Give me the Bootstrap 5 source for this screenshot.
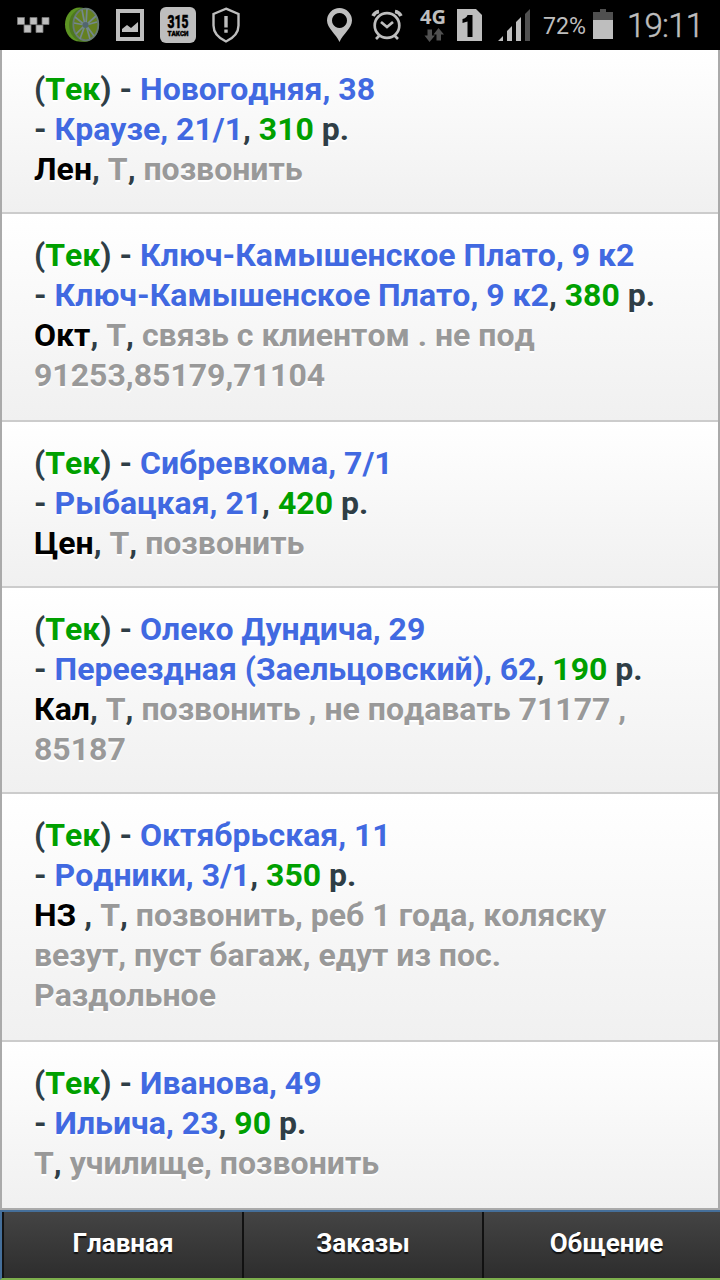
<!DOCTYPE html>
<html lang="ru">
<head>
<meta charset="utf-8">
<meta name="viewport" content="width=device-width, initial-scale=1">
<title>Заказы</title>
<link href="https://cdn.jsdelivr.net/npm/bootstrap@5.3.0/dist/css/bootstrap.min.css" rel="stylesheet">
<style>
body{font-family:Roboto,"Noto Sans",sans-serif;font-kerning:none;height:1280px;overflow:hidden;background:#fff}
.status{height:50px;background:#000}
.status svg{display:block}
.orders{border:2px solid #aaa;border-top:0;height:1160px}
.orders .list-group-item{height:166px;padding:21px 32px 0;border:0;border-bottom:2px solid #ccc;background:linear-gradient(#fff,#f0f0f0);color:#2f3e46;font-size:32px;font-weight:700;line-height:40px;text-shadow:0 2px 0 #fff;white-space:nowrap}
.orders .first-item{height:164px;padding-top:19px}
.orders .h-208{height:208px}.orders .h-206{height:206px}.orders .h-248{height:248px}
.addr{color:#4169e1}.ok{color:#00a000}.dist{color:#000}.note{color:#999}
.tabs{height:70px;border-top:2px solid #456f9a;border-bottom:2px solid #7cae4c;border-left:2px solid #456f9a}
.tabs .nav-link{flex:0 0 240px;border-left:2px solid #111;background:linear-gradient(#444,#2d2d2d);color:#fff;font-size:26px;font-weight:700;line-height:62px;padding:0;text-shadow:0 2px 1px #111;border-radius:0}
.tabs .nav-link:last-child{flex-basis:238px;padding-left:9px}
</style>
</head>
<body class="d-flex flex-column">
<header class="status flex-shrink-0">
<svg width="720" height="50" viewBox="0 0 720 50" fill="#bebebe" font-family="Roboto">
<path d="M17.500 17.500h7v7h-7zM30 17.500h7v7h-7zM42 17.500h7v7h-7zM24 25h7v7.500h-7zM36 25h7v7.500h-7z"/>
<path d="M17.500 17.500h7v7h-7zM30 17.500h7v7h-7zM42 17.500h7v7h-7zM24 25h7v7.500h-7zM36 25h7v7.500h-7z" fill="none" stroke="#777" stroke-width=".8"/>
<ellipse cx="79.500" cy="24.500" rx="14.500" ry="17" fill="#5d9423"/>
<ellipse cx="84" cy="25" rx="15" ry="17" fill="#4d7820"/>
<ellipse cx="85.800" cy="24.500" rx="12.500" ry="15.800" fill="#648020" stroke="#687a76" stroke-width="1.800"/>
<path d="M85 25L82 10M86 25l1-16M86 25l10-9M86 25l11-3M86 25l8 11M86 25l4 14M85 25l-5 14M85 25l-9 9M85 25l-11-2M85 25l-10-8" stroke="#74888c" stroke-width="1.700"/>
<circle cx="85.500" cy="25" r="3" fill="#52666e"/>
<path d="M116 9h28v32h-28zM120 13v24h20V13z" fill-rule="evenodd"/><path d="M122 32v-3l5-4 4 3 7-6v10z"/>
<rect x="160" y="7" width="36" height="36" rx="6"/>
<text x="167.500" y="28" textLength="21" lengthAdjust="spacingAndGlyphs" font-size="18.500" font-weight="900" fill="#000" stroke="#000" stroke-width=".5">315</text>
<text x="167.500" y="36" textLength="21" lengthAdjust="spacingAndGlyphs" font-size="7" font-weight="900" fill="#000" stroke="#000" stroke-width=".4">ТАКСИ</text>
<path d="M226 8.700l12.500 5.300v11.500c0 7-5 12.500-12.500 16-7.500-3.500-12.500-9-12.500-16V14z" fill="none" stroke="#bebebe" stroke-width="2.400"/><path d="M224.300 16h3.400v11.500h-3.400zM224.300 29.500h3.400v3.200h-3.400z"/>
<path fill-rule="evenodd" d="M339.500 42C336 34 327 28 327 20.500a12.500 12.500 0 0 1 25 0C352 28 343 34 339.500 42zM339.500 13a7.500 7.500 0 1 0 .01 0z"/>
<g fill="none" stroke="#bebebe" stroke-width="2.700"><circle cx="387" cy="25.500" r="12.300"/><path d="M381 22l6 5 6-5M380 35l-4 4M394 35l4 4"/><path d="M373 16q2-4 6-4.500M401 16q-2-4-6-4.500" stroke-width="3.600"/></g>
<text x="420" y="24" font-size="20" font-family="Open Sans" font-weight="700" textLength="26" lengthAdjust="spacingAndGlyphs">4G</text>
<path d="M427.500 29.500h4.500v6h3l-5.500 6.500-5-6.500h3zM436.500 40.500h4.500v-6h3l-5.500-6.500-5 6.500h3z" fill="#505050"/>
<path d="M457 9h19l6 6v26h-25z"/><path d="M467.500 15h5v22h-5V21.500l-5 1.500v-4q4-1 5-4z" fill="#000"/>
<path d="M498 41l5-5v5zM507 31l5-5v15h-5zM516 22l5-5v24h-5z"/><path d="M525 14l5-5v32h-5z" fill="#505050"/>
<text x="543" y="34" font-size="24" textLength="43" lengthAdjust="spacingAndGlyphs">72%</text>
<path d="M593 12h7V9h6v3h7v8h-20z" fill="#505050"/><path d="M593 20h20v19h-20z"/>
<text x="627" y="37" font-size="33" font-weight="300" stroke="#bebebe" stroke-width=".5" textLength="77">19:11</text>
</svg>
</header>
<main class="orders list-group list-group-flush rounded-0 flex-shrink-0">
<div class="list-group-item first-item">(<span class="ok">Тек</span>) - <span class="addr">Новогодняя, 38</span><br>- <span class="addr">Краузе, 21/1</span>, <span class="ok">310</span> р.<br><span class="dist">Лен</span>, <span class="note">Т</span>, <span class="note">позвонить</span></div>
<div class="list-group-item h-208">(<span class="ok">Тек</span>) - <span class="addr">Ключ-Камышенское Плато, 9 к2</span><br>- <span class="addr">Ключ-Камышенское Плато, 9 к2</span>, <span class="ok">380</span> р.<br><span class="dist">Окт</span>, <span class="note">Т</span>, <span class="note">связь с клиентом . не под<br>91253,85179,71104</span></div>
<div class="list-group-item">(<span class="ok">Тек</span>) - <span class="addr">Сибревкома, 7/1</span><br>- <span class="addr">Рыбацкая, 21</span>, <span class="ok">420</span> р.<br><span class="dist">Цен</span>, <span class="note">Т</span>, <span class="note">позвонить</span></div>
<div class="list-group-item h-206">(<span class="ok">Тек</span>) - <span class="addr">Олеко Дундича, 29</span><br>- <span class="addr">Переездная (Заельцовский), 62</span>, <span class="ok">190</span> р.<br><span class="dist">Кал</span>, <span class="note">Т</span>, <span class="note">позвонить , не подавать 71177 ,<br>85187</span></div>
<div class="list-group-item h-248">(<span class="ok">Тек</span>) - <span class="addr">Октябрьская, 11</span><br>- <span class="addr">Родники, 3/1</span>, <span class="ok">350</span> р.<br><span class="dist">НЗ</span> , <span class="note">Т</span>, <span class="note">позвонить, реб 1 года, коляску<br>везут, пуст багаж, едут из пос.<br>Раздольное</span></div>
<div class="list-group-item">(<span class="ok">Тек</span>) - <span class="addr">Иванова, 49</span><br>- <span class="addr">Ильича, 23</span>, <span class="ok">90</span> р.<br><span class="note">Т</span>, <span class="note">училище, позвонить</span></div>
</main>
<nav class="tabs nav nav-fill nav-justified flex-nowrap flex-shrink-0">
<a class="nav-link" href="#">Главная</a><a class="nav-link" href="#">Заказы</a><a class="nav-link" href="#">Общение</a>
</nav>
<script src="https://cdn.jsdelivr.net/npm/bootstrap@5.3.0/dist/js/bootstrap.bundle.min.js"></script>
</body>
</html>
